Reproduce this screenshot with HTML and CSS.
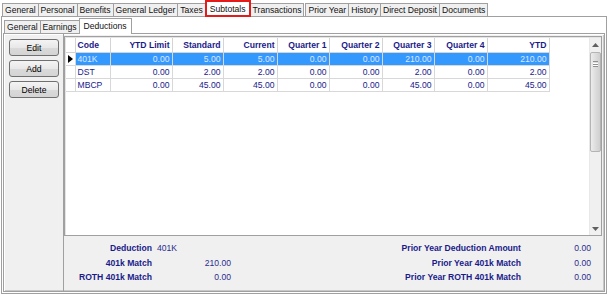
FILE: index.html
```html
<!DOCTYPE html>
<html lang="en">
<head>
	<meta charset="UTF-8">
	<title>Subtotals - Deductions</title>
	<link rel="stylesheet" href="styles.css">
</head>
<body>
	<div id="window">
		<ul class="tabs">
			<li>General</li>
			<li>Personal</li>
			<li>Benefits</li>
			<li>General Ledger</li>
			<li>Taxes</li>
			<li class="selected">Subtotals</li>
			<li>Transactions</li>
			<li class="gap">Prior Year</li>
			<li>History</li>
			<li>Direct Deposit</li>
			<li>Documents</li>
		</ul>
		<div class="page">
			<ul class="subtabs">
				<li>General</li>
				<li>Earnings</li>
				<li class="selected">Deductions</li>
			</ul>
			<div class="subpage">
				<div class="side">
					<button class="btn">Edit</button>
					<button class="btn">Add</button>
					<button class="btn">Delete</button>
				</div>
				<div class="main">
					<div class="grid">
						<div class="grid-body">
							<table>
								<colgroup>
									<col class="c-ind">
									<col class="c-code">
									<col class="c-limit">
									<col class="c-std">
									<col class="c-cur">
									<col class="c-q1">
									<col class="c-q2">
									<col class="c-q3">
									<col class="c-q4">
									<col class="c-ytd">
								</colgroup>
								<thead>
									<tr>
										<th></th>
										<th class="left">Code</th>
										<th>YTD Limit</th>
										<th>Standard</th>
										<th>Current</th>
										<th>Quarter 1</th>
										<th>Quarter 2</th>
										<th>Quarter 3</th>
										<th>Quarter 4</th>
										<th>YTD</th>
									</tr>
								</thead>
								<tbody>
									<tr class="selected">
										<td class="ind"><span class="pointer"></span></td>
										<td class="left">401K</td>
										<td>0.00</td>
										<td>5.00</td>
										<td>5.00</td>
										<td>0.00</td>
										<td>0.00</td>
										<td>210.00</td>
										<td>0.00</td>
										<td>210.00</td>
									</tr>
									<tr>
										<td class="ind"></td>
										<td class="left">DST</td>
										<td>0.00</td>
										<td>2.00</td>
										<td>2.00</td>
										<td>0.00</td>
										<td>0.00</td>
										<td>2.00</td>
										<td>0.00</td>
										<td>2.00</td>
									</tr>
									<tr>
										<td class="ind"></td>
										<td class="left">MBCP</td>
										<td>0.00</td>
										<td>45.00</td>
										<td>45.00</td>
										<td>0.00</td>
										<td>0.00</td>
										<td>45.00</td>
										<td>0.00</td>
										<td>45.00</td>
									</tr>
								</tbody>
							</table>
						</div>
						<div class="scroll">
							<div class="arrow">
								<svg width="7" height="4" viewBox="0 0 7 4"><path d="M0 4 L3.5 0 L7 4 Z" fill="#606060"/></svg>
							</div>
							<div class="thumb">
								<span class="grip"></span>
							</div>
							<div class="track"></div>
							<div class="arrow">
								<svg width="7" height="4" viewBox="0 0 7 4"><path d="M0 0 L3.5 4 L7 0 Z" fill="#606060"/></svg>
							</div>
						</div>
					</div>
					<div class="summary">
						<dl class="sum-left">
							<dt>Deduction</dt>
							<dd class="left">401K</dd>
							<dt>401k Match</dt>
							<dd>210.00</dd>
							<dt>ROTH 401k Match</dt>
							<dd>0.00</dd>
						</dl>
						<dl class="sum-right">
							<dt>Prior Year Deduction Amount</dt>
							<dd>0.00</dd>
							<dt>Prior Year 401k Match</dt>
							<dd>0.00</dd>
							<dt>Prior Year ROTH 401k Match</dt>
							<dd>0.00</dd>
						</dl>
					</div>
				</div>
			</div>
		</div>
	</div>
</body>
</html>
```

FILE: styles.css
```css
*{
	margin: 0;
	padding: 0;
	box-sizing: border-box;
}
ul{
	list-style: none;
}
body{
	background: #fff;
	font-family: "Liberation Sans", Arial, sans-serif;
	font-size: 8.6px;
	color: #000;
}
#window{
	width: 610px;
	height: 296px;
	padding: 0 3px 0 1px;
}

/* top tab strip */
.tabs{
	display: flex;
	align-items: flex-end;
	height: 16px;
	padding-left: 1px;
}
.tabs li{
	height: 13px;
	line-height: 12px;
	padding: 0 2px;
	background: #f0f0f0;
	border: 1px solid #a0a0a0;
	border-bottom: none;
	margin-right: -1px;
	white-space: nowrap;
	color: #111;
}
.tabs li.gap{
	margin-left: 2px;
}
.tabs li.selected{
	position: relative;
	height: 17px;
	line-height: 15px;
	margin-bottom: -1px;
	padding: 0 3px;
	background: #fff;
	border: 2px solid #e41b1b;
	z-index: 1;
}

/* page below tabs */
.page{
	height: 278px;
	background: #fff;
	border: 1px solid #a0a0a0;
	padding: 0 1px 2px 1px;
}
.subtabs{
	display: flex;
	align-items: flex-end;
	height: 16px;
	padding-left: 1px;
}
.subtabs li{
	height: 13px;
	line-height: 12px;
	padding: 0 2px;
	background: #f0f0f0;
	border: 1px solid #a0a0a0;
	border-bottom: none;
	margin-right: -1px;
	color: #111;
}
.subtabs li.selected{
	position: relative;
	height: 16px;
	line-height: 15px;
	margin-bottom: -1px;
	padding: 0 4px;
	background: #fff;
	z-index: 1;
}
.subpage{
	display: flex;
	height: 259px;
	background: #f0f0f0;
	border: 1px solid #a0a0a0;
	box-shadow: inset 1px 1px 0 #fff, inset -1px -1px 0 #c8c8c8;
}

/* buttons column */
.side{
	width: 60px;
	display: flex;
	flex-direction: column;
	gap: 4px;
	padding: 5px 0 0 5px;
	border-right: 1px solid #a0a0a0;
}
.btn{
	width: 50px;
	height: 17px;
	font-family: inherit;
	font-size: 8.6px;
	color: #000;
	border: 1px solid #707070;
	border-radius: 3px;
	background: linear-gradient(#f4f4f4, #e8e8e8 50%, #dadada 51%, #d4d4d4);
}

/* grid */
.main{
	flex: 1;
	display: flex;
	flex-direction: column;
	padding: 2px 2px 0 0;
}
.grid{
	display: flex;
	height: 200px;
	background: #fff;
	border: 1px solid #a0a0a0;
	box-shadow: inset 1px 1px 0 #e4e4e4;
	padding: 1px 0 0 1px;
}
.grid-body{
	flex: 1;
}
table{
	border-collapse: collapse;
	table-layout: fixed;
	width: 483px;
	color: #1a1a8a;
}
.c-ind{ width: 9px; }
.c-code{ width: 35px; }
.c-limit{ width: 62px; }
.c-std{ width: 51px; }
.c-cur{ width: 54px; }
.c-q1{ width: 52px; }
.c-q2{ width: 53px; }
.c-q3{ width: 52px; }
.c-q4{ width: 53px; }
.c-ytd{ width: 62px; }
th{
	height: 14px;
	font-weight: bold;
	text-align: right;
	padding: 0 2px;
	border-right: 1px solid #d4d4d4;
	border-bottom: 1px solid #d4d4d4;
	background: #fff;
}
td{
	height: 13px;
	text-align: right;
	padding: 0 2px;
	border-right: 1px solid #d8d8d8;
	border-bottom: 1px solid #d8d8d8;
	white-space: nowrap;
}
th.left,
td.left{
	text-align: left;
}
td.ind{
	background: #fff;
	padding: 0;
	text-align: center;
}
.pointer{
	display: inline-block;
	width: 0;
	height: 0;
	border-top: 4px solid transparent;
	border-bottom: 4px solid transparent;
	border-left: 5px solid #000;
	vertical-align: middle;
}
tr.selected td{
	background: #3399ff;
	color: #dfe6ff;
}
tr.selected td.ind{
	background: #fff;
}

/* scrollbar */
.scroll{
	width: 12px;
	display: flex;
	flex-direction: column;
	background: #f0f0f0;
	border-left: 1px solid #e8e8e8;
}
.arrow{
	height: 13px;
	display: flex;
	align-items: center;
	justify-content: center;
}
.thumb{
	height: 100px;
	margin-top: 1px;
	border: 1px solid #b4b4b4;
	border-radius: 2px;
	background: linear-gradient(to right, #ececec, #dadada 60%, #cfcfcf);
	display: flex;
	justify-content: center;
	padding-top: 8px;
}
.grip{
	width: 5px;
	height: 6px;
	border-top: 1px solid #909090;
	border-bottom: 1px solid #909090;
	background: linear-gradient(#fff 0 1px, #909090 1px 2px, #fff 2px 3px, #909090 3px 4px, transparent 4px);
	background-position: 0 1px;
	background-repeat: no-repeat;
}
.track{
	flex: 1;
}

/* summary under grid */
.summary{
	display: flex;
	justify-content: space-between;
	padding: 5px 11px 0 0;
	color: #1a1a8a;
}
.summary dl{
	display: grid;
	grid-auto-rows: 14.5px;
	line-height: 14.5px;
}
.sum-left{
	grid-template-columns: 88px 79px;
}
.sum-right{
	grid-template-columns: auto 70px;
}
.summary dt{
	font-weight: bold;
	text-align: right;
}
.summary dd{
	text-align: right;
	color: #2b2b8f;
}
.summary dd.left{
	text-align: left;
	padding-left: 5px;
}
```
